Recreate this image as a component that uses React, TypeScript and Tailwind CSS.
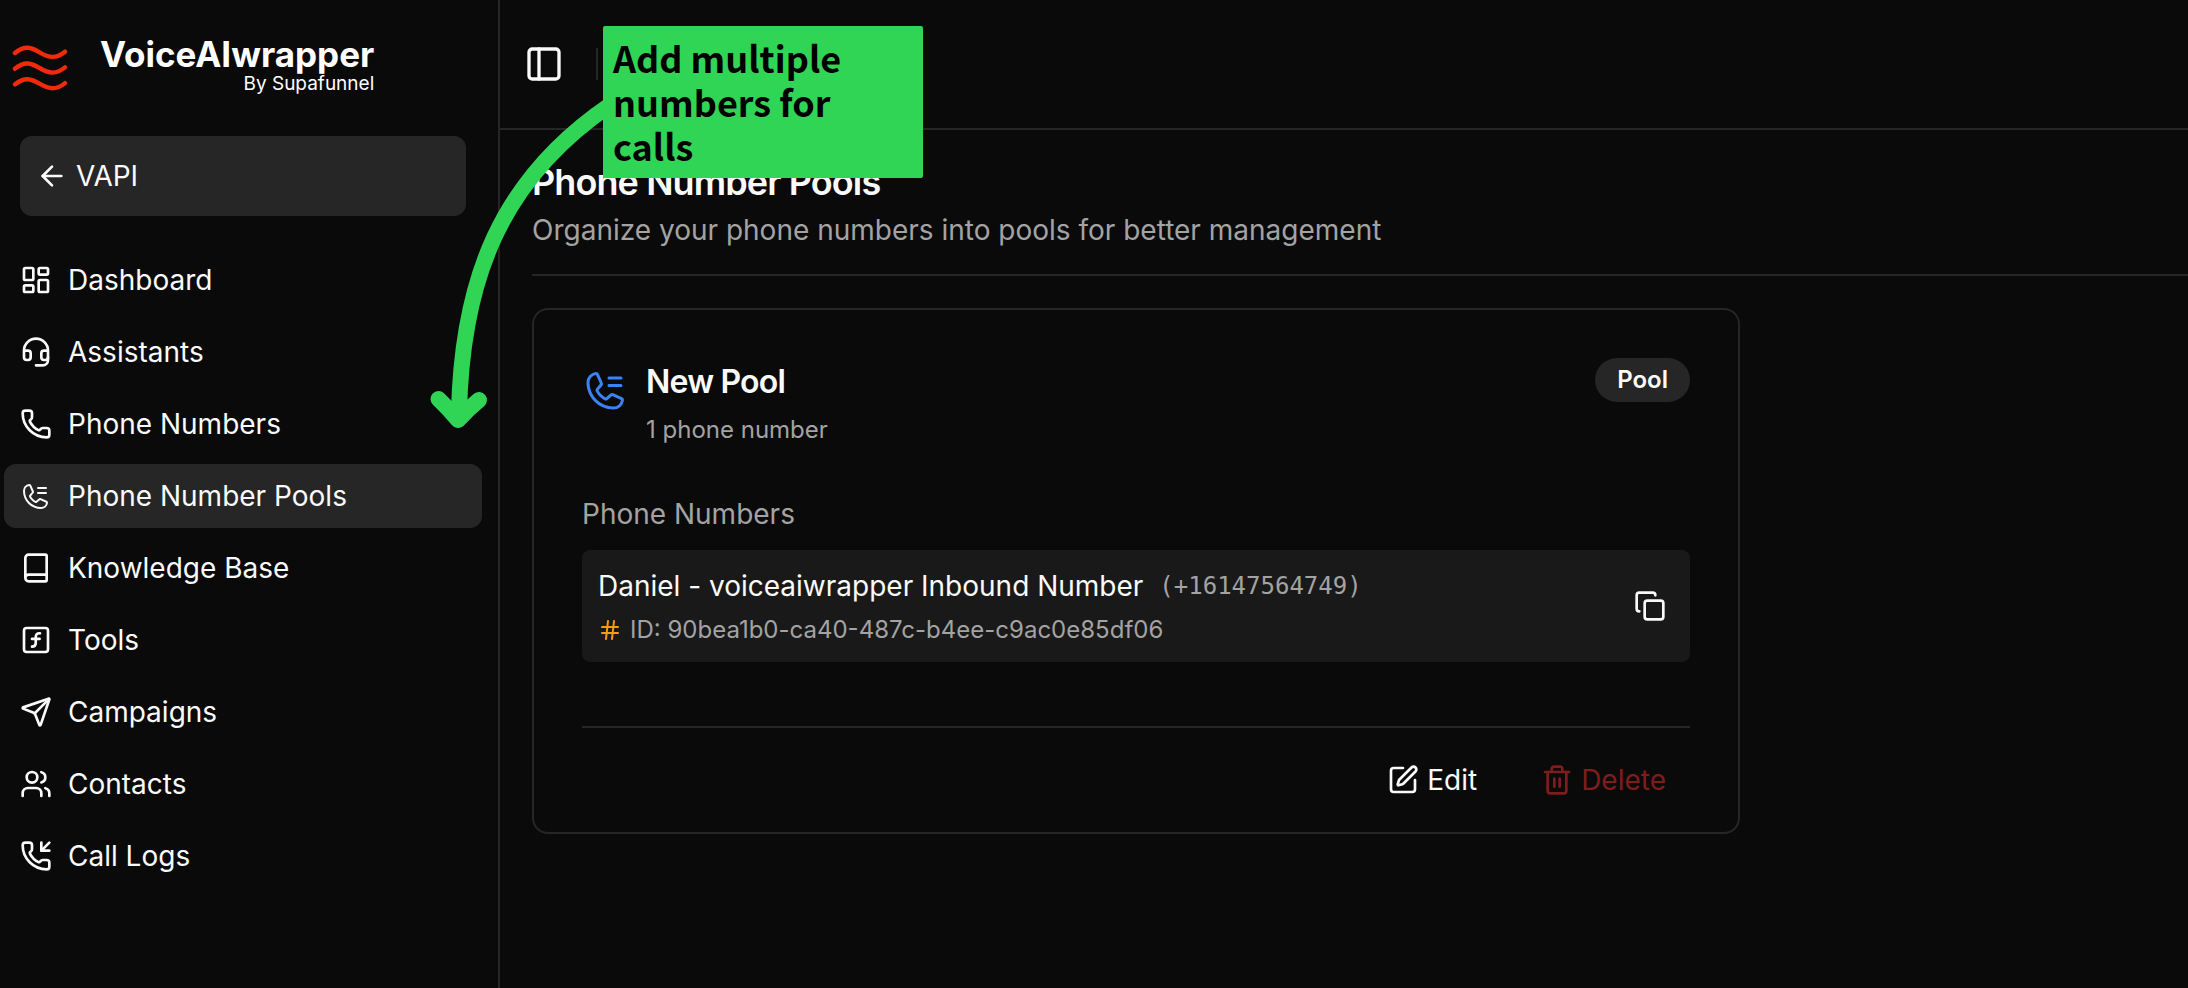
import {
  ArrowLeft,
  Book,
  Copy,
  Hash,
  Headset,
  LayoutDashboard,
  PanelLeft,
  Phone,
  PhoneIncoming,
  Send,
  SquareFunction,
  SquarePen,
  Trash2,
  Users,
} from "lucide-react";
import { PiPhoneList } from "react-icons/pi";

const navItems = [
  { label: "Dashboard", icon: LayoutDashboard },
  { label: "Assistants", icon: Headset },
  { label: "Phone Numbers", icon: Phone },
  { label: "Phone Number Pools", icon: PiPhoneList, active: true },
  { label: "Knowledge Base", icon: Book },
  { label: "Tools", icon: SquareFunction },
  { label: "Campaigns", icon: Send },
  { label: "Contacts", icon: Users },
  { label: "Call Logs", icon: PhoneIncoming },
];

function Brand() {
  return (
    <div className="flex h-34 items-start pl-3 pt-9">
      <svg viewBox="0 0 56 48" className="mt-2 h-12 w-14 shrink-0" fill="none" stroke="#f22a0c" strokeWidth="4.4" strokeLinecap="round">
        <path d="M3 9C7 5.500 11 3.600 16 3.800C25 4.400 31 12.900 40.500 12.900C45.500 12.900 49 11 53 7.700" />
        <path d="M3 24.700C7 21.200 11 19.300 16 19.500C25 20.100 31 28.600 40.500 28.600C45.500 28.600 49 26.700 53 23.400" />
        <path d="M3 40.400C7 36.900 11 35 16 35.200C25 35.800 31 44.300 40.500 44.300C45.500 44.300 49 42.400 53 39.100" />
      </svg>
      <div className="ml-8 text-right text-white">
        <div className="text-[35px] leading-9 font-bold">VoiceAIwrapper</div>
        <div className="text-[19px] leading-6">By Supafunnel</div>
      </div>
    </div>
  );
}

function Sidebar() {
  return (
    <aside className="w-[500px] shrink-0 border-r-2 border-[#262626]">
      <Brand />
      <div className="pr-8 pl-5">
        <button type="button" className="flex h-20 w-full items-center gap-2 rounded-xl bg-[#262626] px-4 text-[28px]">
          <ArrowLeft className="size-8" />
          VAPI
        </button>
      </div>
      <nav className="mt-8 flex flex-col gap-2 pr-4 pl-1">
        {navItems.map(({ label, icon: Icon, active }) => (
          <a
            key={label}
            href="#"
            className={`flex h-16 items-center gap-4 rounded-xl px-4 text-[28px] ${active ? "bg-[#262626]" : ""}`}
          >
            <Icon className="size-8 shrink-0" />
            {label}
          </a>
        ))}
      </nav>
    </aside>
  );
}

function PoolCard() {
  return (
    <article className="mt-8 max-w-[1208px] rounded-2xl border-2 border-[#262626] px-12 pt-12 pb-6">
      <div className="flex items-start justify-between">
        <div className="flex gap-4">
          <PiPhoneList className="mt-2 size-12 text-[#3b82f6]" />
          <div>
            <h2 className="text-[32px] leading-12 font-semibold tracking-tight">New Pool</h2>
            <p className="mt-2 text-2xl text-[#a3a3a3]">1 phone number</p>
          </div>
        </div>
        <span className="rounded-full bg-[#262626] px-[22px] py-[6px] text-2xl leading-8 font-semibold">Pool</span>
      </div>

      <h3 className="mt-12 text-[28px] leading-10 text-[#a3a3a3]">Phone Numbers</h3>
      <div className="mt-4 flex items-center justify-between rounded-lg bg-[#191919] p-4">
        <div>
          <div className="flex items-center gap-4">
            <span className="text-[28px] leading-10">Daniel - voiceaiwrapper Inbound Number</span>
            <span className="font-['DejaVu_Sans_Mono',monospace] text-2xl text-[#a3a3a3]">(+16147564749)</span>
          </div>
          <div className="mt-2 flex items-center gap-2 text-2xl text-[#a3a3a3]">
            <Hash className="size-6 text-[#f59e0b]" />
            ID: 90bea1b0-ca40-487c-b4ee-c9ac0e85df06
          </div>
        </div>
        <button type="button" aria-label="Copy" className="p-2">
          <Copy className="size-8" />
        </button>
      </div>

      <div className="mt-16 flex justify-end gap-4 border-t-2 border-[#262626] pt-6 text-[28px]">
        <button type="button" className="flex h-14 items-center gap-2 px-6">
          <SquarePen className="size-8" />
          Edit
        </button>
        <button type="button" className="flex h-14 items-center gap-2 px-6 text-[#7f1d1d]">
          <Trash2 className="size-8" />
          Delete
        </button>
      </div>
    </article>
  );
}

function Callout() {
  return (
    <div className="pointer-events-none absolute top-0 left-0">
      <svg width="640" height="440" viewBox="0 0 640 440" fill="none" stroke="#30d556" strokeWidth="16" strokeLinecap="round" strokeLinejoin="round">
        <path d="M610 105C500 180 462 280 459 412" />
        <path d="M438.500 399Q449 409 458 420Q468 409 479 400" />
        <path d="M450 405L458 420L468 405Z" strokeWidth="8" fill="#30d556" />
      </svg>
      <p className="absolute top-[26px] left-[603px] w-80 rounded-xs bg-[#30d556] pt-[9px] pr-16 pb-[11px] pl-[10px] font-['Noto_Sans_CJK_SC',sans-serif] text-4xl leading-11 font-bold text-black">
        Add multiple numbers for calls
      </p>
    </div>
  );
}

export default function App() {
  return (
    <div className="relative flex min-h-screen bg-[#0a0a0a] font-[Inter,sans-serif] text-[#fafafa]">
      <Sidebar />
      <main className="min-w-0 flex-1">
        <header className="flex h-[130px] items-center gap-6 border-b-2 border-[#262626] px-4">
          <button type="button" aria-label="Toggle sidebar" className="p-2">
            <PanelLeft className="size-10" />
          </button>
          <div className="h-8 w-[2px] bg-[#262626]" />
        </header>
        <div className="pt-8 pl-8">
          <div className="border-b-2 border-[#262626] pb-6">
            <h1 className="text-4xl leading-10 font-semibold tracking-tight">Phone Number Pools</h1>
            <p className="mt-2 text-[28px] leading-10 text-[#a3a3a3]">
              Organize your phone numbers into pools for better management
            </p>
          </div>
          <PoolCard />
        </div>
      </main>
      <Callout />
    </div>
  );
}
